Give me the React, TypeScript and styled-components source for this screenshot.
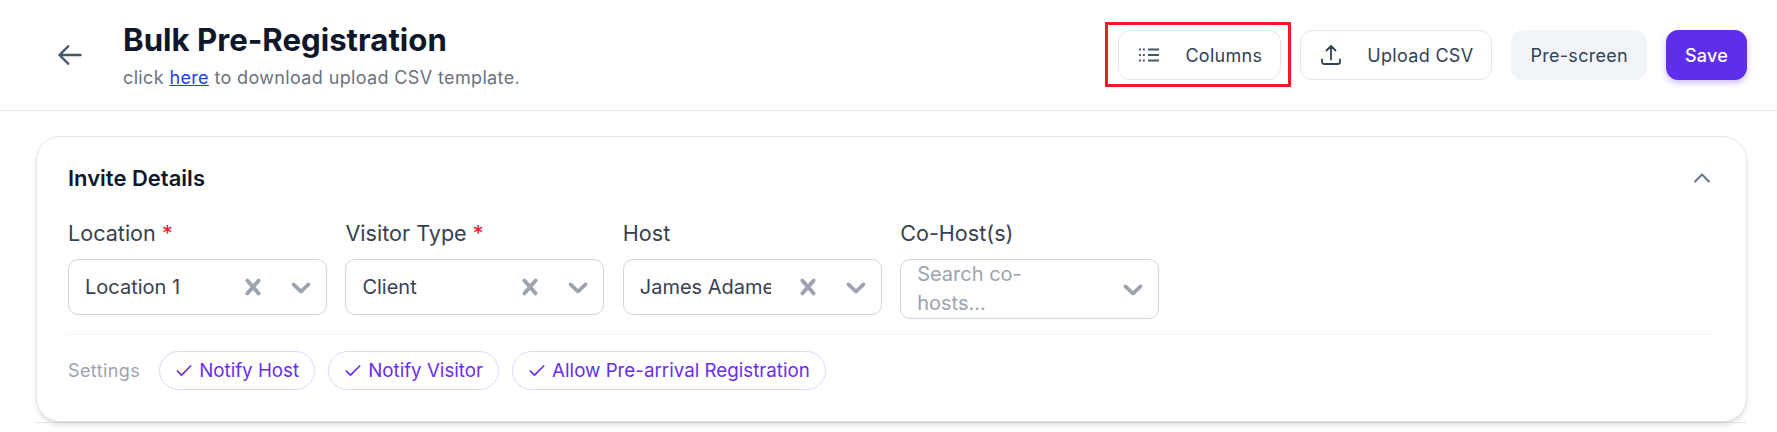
import React from "react";
import styled, { createGlobalStyle } from "styled-components";
import { Check } from "lucide-react";

const GlobalStyle = createGlobalStyle`
  html, body {
    margin: 0;
    padding: 0;
    background: #fff;
    font-family: Inter, "Liberation Sans", sans-serif;
    overflow: hidden;
  }
`;

const Page = styled.div`
  width: 1777px;
  height: 432px;
  overflow: hidden;
  background: #fff;
`;

const Header = styled.header`
  height: 111px;
  box-sizing: border-box;
  border-bottom: 1px solid #e5e7eb;
  padding: 0 30px 0 52px;
  display: flex;
  align-items: center;
`;

const BackButton = styled.button`
  border: 0;
  background: none;
  padding: 0;
  width: 36px;
  height: 36px;
  display: flex;
  align-items: center;
  justify-content: center;
  color: #475569;
`;

const TitleBlock = styled.div`
  display: flex;
  flex-direction: column;
  flex: 1;
  margin: 2px 0 0 35px;
`;

const Title = styled.h1`
  margin: 0;
  font-size: 31.2px;
  line-height: 36px;
  font-weight: 700;
  color: #0f172a;
`;

const Hint = styled.p`
  margin: 8px 0 0;
  font-size: 18px;
  letter-spacing: 0.36px;
  line-height: 24px;
  color: #6b7280;

  a {
    color: #1d3fe8;
    text-decoration: underline;
  }
`;

const Actions = styled.div`
  display: flex;
  align-items: center;
  gap: 19px;
`;

const Highlighted = styled.div`
  position: relative;
  display: flex;
`;

const RedFrame = styled.span`
  position: absolute;
  inset: -8px -10px -7px -13px;
  border: 3px solid #ed1c24;
  pointer-events: none;
`;

const Button = styled.button<{ $variant?: "outline" | "soft" | "primary" }>`
  height: 50px;
  box-sizing: border-box;
  display: flex;
  align-items: center;
  gap: 24px;
  padding: 0 18px;
  border-radius: 12px;
  font-family: Inter, "Liberation Sans", sans-serif;
  font-size: 18px;
  font-weight: ${({ $variant }) => ($variant === "primary" ? 500 : 400)};
  letter-spacing: ${({ $variant }) => ($variant === "primary" ? "0.2px" : "0.3px")};
  border: 1px solid
    ${({ $variant }) => ($variant === "soft" ? "#f1f5f9" : $variant === "primary" ? "#5f2eea" : "#e2e8f0")};
  background: ${({ $variant }) =>
    $variant === "soft" ? "#f1f5f9" : $variant === "primary" ? "#5f2eea" : "#fff"};
  color: ${({ $variant }) => ($variant === "primary" ? "#fff" : "#334155")};
  box-shadow: ${({ $variant }) => ($variant === "primary" ? "0 3px 6px rgba(95,46,234,.3)" : "none")};
`;

const CardWrap = styled.div`
  margin: 25px 30px 0 36px;
  height: 287px;
  box-sizing: border-box;
  border-bottom: 1px solid #e5e7eb;
`;

const Card = styled.section`
  height: 286px;
  box-sizing: border-box;
  border: 1px solid #e5e7eb;
  border-radius: 24px;
  background: #fff;
  box-shadow: 0 4px 6px -1px rgba(0, 0, 0, 0.1), 0 2px 4px -2px rgba(0, 0, 0, 0.1);
  padding: 27px 33px 0 31px;
`;

const CardHead = styled.div`
  display: flex;
  align-items: center;
  justify-content: space-between;
  height: 28px;
`;

const CardTitle = styled.h2`
  margin: 0;
  font-size: 22px;
  line-height: 28px;
  font-weight: 600;
  color: #0f172a;
`;

const Collapse = styled.span`
  display: flex;
  color: #64748b;
`;

const Fields = styled.div`
  display: grid;
  grid-template-columns: repeat(4, 259px);
  column-gap: 18.4px;
  margin-top: 27px;
  align-items: start;
`;

const Field = styled.div`
  display: flex;
  flex-direction: column;
  gap: 12px;
`;

const Label = styled.label`
  font-size: 21.6px;
  line-height: 28px;
  color: #374151;

  b {
    color: #f0172f;
    font-weight: 400;
  }
`;

const Select = styled.div<{ $tall?: boolean }>`
  box-sizing: border-box;
  height: ${({ $tall }) => ($tall ? "60px" : "56px")};
  border: 1px solid #d4d4dc;
  border-radius: 10px;
  display: flex;
  align-items: center;
  padding: 0 1px 0 16px;
  font-size: 20px;
`;

const Value = styled.div<{ $placeholder?: boolean }>`
  flex: 1;
  min-width: 0;
  margin-right: ${({ $placeholder }) => ($placeholder ? "45px" : "13px")};
  white-space: ${({ $placeholder }) => ($placeholder ? "normal" : "nowrap")};
  overflow: hidden;
  line-height: 29px;
  color: ${({ $placeholder }) => ($placeholder ? "#9ca3af" : "#374151")};
`;

const SelectIcon = styled.span`
  width: 32px;
  height: 32px;
  padding: 0 8px;
  color: #9ca3af;
  flex: none;
  display: flex;
`;

const Divider = styled.hr`
  border: 0;
  border-top: 1px solid #f3f4f6;
  margin: 15px 0 0;
`;

const Settings = styled.div`
  display: flex;
  align-items: center;
  gap: 13px;
  margin-top: 16px;
`;

const SettingsLabel = styled.span`
  font-size: 18px;
  letter-spacing: 0.4px;
  color: #9ca3af;
  margin-right: 6px;
`;

const Chip = styled.span`
  height: 39px;
  box-sizing: border-box;
  display: flex;
  align-items: center;
  gap: 5px;
  padding: 0 15px 0 14px;
  border: 1px solid #ddd6fe;
  border-radius: 20px;
  font-size: 18.75px;
  font-weight: 400;
  color: #6a2df0;
`;

const ArrowBack = () => (
  <svg viewBox="0 0 24 24" width="28" height="28" fill="none" stroke="currentColor" strokeWidth="2.1" strokeLinecap="round" strokeLinejoin="round">
    <path d="M10.5 19.5 3 12m0 0 7.5-7.5M3 12h18" />
  </svg>
);

const ColumnsIcon = () => (
  <svg viewBox="0 0 24 24" width="24" height="24" fill="none" stroke="#475569" strokeWidth="1.9">
    <path d="M2 6.500h1.900M5.900 6.500h1.900M2 12h1.900M5.900 12h1.900M2 17.500h1.900M5.900 17.500h1.900" />
    <path d="M11 6.500h11M11 12h11M11 17.500h11" />
  </svg>
);

const UploadIcon = () => (
  <svg viewBox="0 0 24 24" width="24" height="24" fill="none" stroke="#334155" strokeWidth="1.8" strokeLinecap="round" strokeLinejoin="round">
    <path d="M3 16.5v2.25A2.25 2.25 0 0 0 5.25 21h13.5A2.25 2.25 0 0 0 21 18.75V16.500m-13.500-9L12 3m0 0 4.500 4.500M12 3v13.500" />
  </svg>
);

const ChevronUpIcon = () => (
  <svg viewBox="0 0 24 24" width="22" height="22" fill="none" stroke="currentColor" strokeWidth="2.2" strokeLinecap="round" strokeLinejoin="round">
    <path d="M4.500 15.750 12 8.250l7.500 7.500" />
  </svg>
);

const CloseIcon = () => (
  <svg viewBox="0 0 20 20" width="32" height="32" fill="currentColor">
    <path d="M14.348 14.849a1.2 1.2 0 0 1-1.697 0L10 11.819l-2.651 3.029a1.2 1.2 0 1 1-1.697-1.697l2.758-3.15-2.759-3.152a1.2 1.2 0 1 1 1.697-1.697L10 8.183l2.651-3.031a1.2 1.2 0 1 1 1.697 1.697l-2.758 3.152 2.758 3.15a1.2 1.2 0 0 1 0 1.698z" />
  </svg>
);

const CaretIcon = () => (
  <svg viewBox="0 0 20 20" width="32" height="32" fill="currentColor">
    <path d="M4.516 7.548c.436-.446 1.043-.481 1.576 0L10 11.295l3.908-3.747c.533-.481 1.141-.446 1.574 0 .436.445.408 1.197 0 1.615-.406.418-4.695 4.502-4.695 4.502a1.095 1.095 0 0 1-1.576 0S4.924 9.581 4.516 9.163c-.409-.418-.436-1.170 0-1.615z" />
  </svg>
);

const fields = [
  { label: "Location", required: true, value: "Location 1" },
  { label: "Visitor Type", required: true, value: "Client" },
  { label: "Host", value: "James Adames" },
];

const chips = ["Notify Host", "Notify Visitor", "Allow Pre-arrival Registration"];

export default function App() {
  return (
    <Page>
      <GlobalStyle />
      <Header>
        <BackButton>
          <ArrowBack />
        </BackButton>
        <TitleBlock>
          <Title>Bulk Pre-Registration</Title>
          <Hint>
            click <a href="#">here</a> to download upload CSV template.
          </Hint>
        </TitleBlock>
        <Actions>
          <Highlighted>
            <Button $variant="outline">
              <ColumnsIcon />
              Columns
            </Button>
            <RedFrame />
          </Highlighted>
          <Button $variant="outline">
            <UploadIcon />
            Upload CSV
          </Button>
          <Button $variant="soft">Pre-screen</Button>
          <Button $variant="primary">Save</Button>
        </Actions>
      </Header>
      <CardWrap>
        <Card>
          <CardHead>
            <CardTitle>Invite Details</CardTitle>
            <Collapse>
              <ChevronUpIcon />
            </Collapse>
          </CardHead>
          <Fields>
            {fields.map((f) => (
              <Field key={f.label}>
                <Label>
                  {f.label} {f.required && <b>*</b>}
                </Label>
                <Select>
                  <Value>{f.value}</Value>
                  <SelectIcon><CloseIcon /></SelectIcon>
                  <SelectIcon><CaretIcon /></SelectIcon>
                </Select>
              </Field>
            ))}
            <Field>
              <Label>Co-Host(s)</Label>
              <Select $tall>
                <Value $placeholder>Search co-hosts...</Value>
                <SelectIcon><CaretIcon /></SelectIcon>
              </Select>
            </Field>
          </Fields>
          <Divider />
          <Settings>
            <SettingsLabel>Settings</SettingsLabel>
            {chips.map((c) => (
              <Chip key={c}>
                <Check size={20} strokeWidth={2} />
                {c}
              </Chip>
            ))}
          </Settings>
        </Card>
      </CardWrap>
    </Page>
  );
}
